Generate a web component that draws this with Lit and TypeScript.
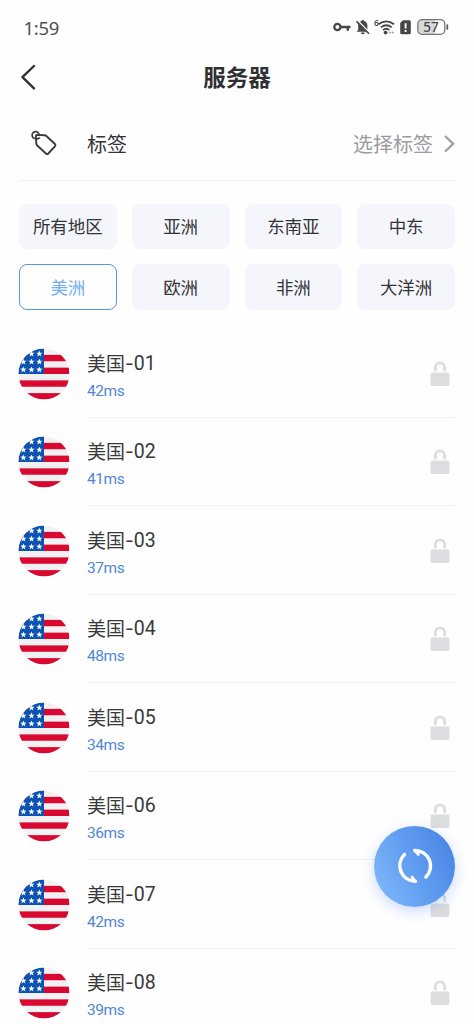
import { LitElement, html, svg, css } from "lit";
import { customElement, property, state } from "lit/decorators.js";

@customElement("us-flag")
class UsFlag extends LitElement {
  static styles = css`
    :host { display: block; width: 52px; height: 52px; }
    svg { display: block; }
  `;
  render() {
    const star = "0,-3.3 .9,-1.1 3.1,-1 1.35,.5 1.95,2.7 0,1.4 -1.95,2.7 -1.35,.5 -3.1,-1 -.9,-1.1";
    const stars = [5.3, 13.3, 21.2].flatMap((y) => [4.9, 13, 20.8].map((x) => [x, y]));
    return html`<svg width="52" height="52" viewBox="-.5 -.5 52 52">
      <clipPath id="round"><circle cx="25.5" cy="25.5" r="25.5" /></clipPath>
      <g clip-path="url(#round)">
        <rect width="51" height="51" fill="#f1f0f2" />
        ${[1, 3, 5, 7].map((n) => svg`<rect y=${n * 6.375} width="51" height="6.375" fill="#d80830" />`)}
        <rect width="25.5" height="25.5" fill="#0b52b2" />
        ${stars.map(([x, y]) => svg`<polygon points=${star} transform=${`translate(${x} ${y})`} fill="#f5f7fb" />`)}
      </g>
    </svg>`;
  }
}

@customElement("server-row")
class ServerRow extends LitElement {
  @property() region = "";
  @property() num = "";
  @property() ping = "";
  static styles = css`
    :host { display: flex; height: 88.5px; box-sizing: border-box; padding: 0 19px 0 18px; }
    us-flag { margin-top: 18.8px; flex: none; }
    .body {
      flex: 1; margin-left: 17px; display: flex; justify-content: space-between;
      border-bottom: 1px solid #f1f1f2; box-sizing: border-box;
    }
    .name { margin-top: 19.8px; height: 28px; line-height: 28px; font-size: 19px; color: #38393b; white-space: nowrap; display: flex; }
    .num { font-family: Roboto, sans-serif; font-size: 19.5px; padding-top: 1px; }
    .dash { font-family: Inter, sans-serif; font-size: 19px; padding-top: 1px; }
    .ping { margin-top: 3.2px; line-height: 22px; font-family: Roboto, sans-serif; font-size: 15.5px; letter-spacing: -0.4px; color: #4f86d8; }
    .lock { margin: 31.8px 5px 0 0; flex: none; }
  `;
  render() {
    return html`<us-flag></us-flag>
      <div class="body">
        <div>
          <div class="name"><span>${this.region}</span><span class="dash">-</span><span class="num">${this.num}</span></div>
          <div class="ping">${this.ping}</div>
        </div>
        <svg class="lock" width="20" height="26" viewBox="0 0 20 26">
          <path d="M5.3 10.2V6.6a4.7 4.7 0 0 1 9.4 0v3.6" fill="none" stroke="#dcddde" stroke-width="2.9" />
          <rect x=".6" y="11.5" width="18.8" height="13.4" rx="1.6" fill="#dcddde" />
        </svg>
      </div>`;
  }
}

@customElement("app-root")
class AppRoot extends LitElement {
  @state() selected = "美洲";
  private regions = ["所有地区", "亚洲", "东南亚", "中东", "美洲", "欧洲", "非洲", "大洋洲"];
  private pings = [42, 41, 37, 48, 34, 36, 42, 39];

  static styles = css`
    :host {
      display: block; position: relative; width: 474px; height: 1024px; overflow: hidden;
      background: #fefefe; color: #333437; font-family: "Noto Sans CJK SC", sans-serif;
    }
    .status { height: 54px; padding: 0 25px 0 23.5px; display: flex; align-items: center; justify-content: space-between; }
    .time { font-family: "Noto Sans", sans-serif; font-size: 18.5px; letter-spacing: -0.3px; color: #505153; }
    .battery { font-family: "Noto Sans", sans-serif; font-size: 13.5px; font-weight: 500; }
    .icons { display: block; }
    .header { height: 46px; display: grid; grid-template-columns: 60px 1fr 60px; align-items: center; }
    .back { margin-left: 20px; }
    .title { text-align: center; font-size: 22.5px; font-weight: 700; line-height: 30px; padding-bottom: 2px; color: #2f3033; }
    .tags {
      height: 81px; margin: 0 19px; border-bottom: 1px solid #f1f1f2; box-sizing: border-box;
      display: flex; align-items: center; font-size: 20px; line-height: 30px; padding-top: 7px;
    }
    .tag { width: 30px; margin: 0 28px 0 10px; }
    .pick { margin-left: auto; color: #9b9b9f; }
    .more { margin-left: 10px; }
    .chips { display: grid; grid-template-columns: repeat(4, 1fr); gap: 15px; padding: 22.5px 19px 0; }
    .chip {
      height: 45.5px; border-radius: 8px; background: #f5f6fb; box-sizing: border-box; font-size: 17.5px;
      display: flex; align-items: center; justify-content: center; padding-bottom: 1.5px;
    }
    .chip.on { background: #fefefe; border: 1.3px solid #5b95d8; color: #72aef0; }
    .list { margin-top: 19.5px; }
    .refresh {
      position: absolute; left: 374px; top: 825.5px; width: 81px; height: 81px; border-radius: 50%;
      background: linear-gradient(65deg, #7eb6f9 8%, #609df1 50%, #4884e4 95%);
      box-shadow: 0 4px 14px rgba(91, 140, 240, 0.32);
      display: flex; align-items: center; justify-content: center;
    }
  `;

  render() {
    return html`
      <div class="status">
        <div class="time">1:59</div>
        <svg class="icons" width="117" height="22" viewBox="332 16 117 22">
          <g fill="none" stroke="#454648">
            <circle cx="337.4" cy="27" r="3.1" stroke-width="2.3" />
            <path d="M341 27h9.5M347.8 27v3.8" stroke-width="2.4" />
          </g>
          <path d="M358.2 30V25.5a4.7 4.9 0 0 1 3.6-4.6v-.8h2v.8a4.7 4.9 0 0 1 3.6 4.6V30l1.6 1.7h-12.4zM361 32.4h3.8a1.9 1.9 0 0 1-3.8 0z" fill="#454648" />
          <path d="M357.6 20.6l12.5 12.6" stroke="#fefefe" stroke-width="1.6" />
          <path d="M356.6 21.4l12.4 12.4" stroke="#454648" stroke-width="1.6" />
          <text x="374" y="25.8" font-size="8.5" font-weight="600" fill="#454648" font-family="Noto Sans">6</text>
          <g fill="none" stroke="#454648" stroke-width="1.8">
            <path d="M378.5 24.2q7.7-5.8 15.6 0M380.9 27.4q5.4-4.4 10.8 0M383 30.1q3.2-2.6 6.4 0" />
          </g>
          <circle cx="385.6" cy="32.6" r="1.9" fill="#454648" />
          <circle cx="390.2" cy="32.6" r="1" fill="#9a9b9d" /><circle cx="392.8" cy="32.6" r="1" fill="#9a9b9d" />
          <path d="M403 20.2h6.2a1.6 1.6 0 0 1 1.6 1.6v10.9a1.6 1.6 0 0 1-1.6 1.6h-7.4a1.6 1.6 0 0 1-1.6-1.6v-9.7z" fill="#454648" />
          <path d="M405.6 23.2v5.2M405.6 30v2" stroke="#fefefe" stroke-width="1.9" />
          <path d="M422 19.8h13V34.2h-13a4 4 0 0 1-4-4v-6.4a4 4 0 0 1 4-4z" fill="#d9d9da" />
          <rect x="417.8" y="19.7" width="27" height="14.7" rx="4.3" fill="none" stroke="#747577" stroke-width="1.3" />
          <path d="M447.3 25v4" stroke="#5a5b5d" stroke-width="1.7" stroke-linecap="round" />
          <text class="battery" x="431" y="32" text-anchor="middle" fill="#454648">57</text>
        </svg>
      </div>
      <div class="header">
        <svg class="back" width="18" height="28" viewBox="0 0 18 28">
          <path d="M14 3L2.4 14.2 14 25.4" fill="none" stroke="#303134" stroke-width="2.4" stroke-linecap="round" stroke-linejoin="round" />
        </svg>
        <div class="title">服务器</div>
      </div>
      <div class="tags">
        <svg class="tag" width="30" height="30" viewBox="29 129.5 30 30" fill="none" stroke="#3b3c3f" stroke-width="1.9" stroke-linecap="round" stroke-linejoin="round">
          <path d="M37.2 135.4L44.6 135.8Q45.8 135.9 46.6 136.7L54.9 144.5Q56 145.7 54.9 146.9L48.3 154Q47.1 155.1 45.9 154L37.2 146Q36.4 145.3 36.3 144.2L35.9 136.6Q35.9 135.5 37.2 135.4Z" />
          <path d="M38.9 134.4a3.5 3.5 0 1 0-4.1 4.6q2.3 1 4.6-.4" stroke-width="1.7" />
        </svg>
        <span>标签</span>
        <span class="pick">选择标签</span>
        <svg class="more" width="12" height="20" viewBox="0 0 12 20"><path d="M2 2L10.2 9.8 2 17.6" fill="none" stroke="#a4a4a7" stroke-width="2.4" /></svg>
      </div>
      <div class="chips">
        ${this.regions.map((r) => html`<div class="chip ${r === this.selected ? "on" : ""}" @click=${() => (this.selected = r)}>${r}</div>`)}
      </div>
      <div class="list">
        ${this.pings.map((p, i) => html`<server-row region="美国" num=${`0${i + 1}`} ping=${`${p}ms`}></server-row>`)}
      </div>
      <div class="refresh">
        <svg width="40" height="40" viewBox="394.5 846 40 40" fill="none" stroke="#fff" stroke-width="3.5" stroke-linecap="round" stroke-linejoin="round">
          <path d="M404 854.6A15.5 15.5 0 0 0 415 881.2" />
          <path d="M411.6 880.4L415 881.2 411.6 876.8Z" fill="#fff" stroke-width="2.4" />
          <path d="M425.4 877A15.5 15.5 0 0 0 414.2 850.4" />
          <path d="M417.8 851.2L414.2 850.4 417.8 854.8Z" fill="#fff" stroke-width="2.4" />
        </svg>
      </div>`;
  }
}
